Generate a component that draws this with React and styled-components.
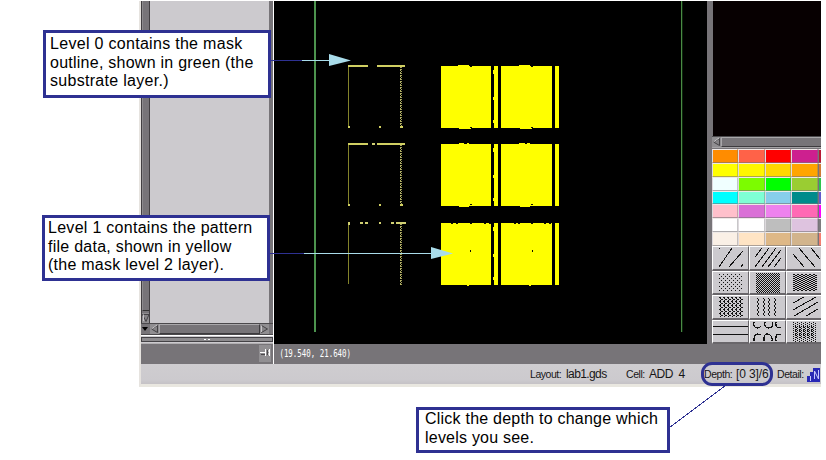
import React from "react";
import styled, { createGlobalStyle } from "styled-components";

const GlobalStyle = createGlobalStyle`
  * { box-sizing: border-box; }
  body { margin: 0; background: #fff; font-family: "Liberation Sans", Arial, sans-serif; }
`;

const Page = styled.div`
  position: relative;
  width: 826px;
  height: 460px;
  overflow: hidden;
  padding: 1px 0 0 139px;
`;

const Window = styled.div`
  width: 682px;
  height: 386px;
  display: flex;
  flex-direction: column;
  border-left: 2px solid #e6e3df;
  border-bottom: 3px solid #e9e7e0;
  background: #777478;
`;

const Workspace = styled.div`
  display: flex;
  height: 343px;
`;

const LayerColumn = styled.div`
  width: 133px;
  display: flex;
  flex-direction: column;
  border-right: 1px solid #fff;
`;

const LayerArea = styled.div`
  display: flex;
  height: 322px;
  padding-right: 4px;
`;

const VerticalScroll = styled.div`
  width: 9px;
  height: 322px;
  border-left: 1px solid #423f42;
  border-right: 1px solid #423f42;
  display: flex;
  flex-direction: column;
  justify-content: space-between;
`;

const VerticalThumb = styled.div`
  height: 310px;
  background: #777478;
  border-left: 1px solid #8d8b8e;
  border-bottom: 1px solid #333;
`;

const LayerList = styled.div`
  flex: 1;
  background: #cccace;
`;

const HorizontalScroll = styled.div`
  display: flex;
  height: 12px;
  padding: ${(p) => (p.$inset ? "0 4px 0 0" : "0")};
  border-top: 1px solid #4b494c;
  border-bottom: 1px solid ${(p) => (p.$inset ? "#4b494c" : "#a5a3a6")};
  background: #777478;
`;

const HorizontalThumb = styled.div`
  flex: 1;
  border: 1px solid #3d3b3e;
  border-right-width: ${(p) => (p.$open ? 0 : 1)}px;
  border-top-color: #a9a7aa;
  border-left-color: #a9a7aa;
`;

const Splitter = styled.div`
  height: 9px;
  border-top: 1px solid #fff;
  border-bottom: 1px solid #b2b0b3;
  background: #cccace;
  padding-top: 1px;
`;

const SplitterBar = styled.div`
  height: 5px;
  border: 1px solid #444246;
  background: #8d8b8e;
  display: flex;
  justify-content: center;
  gap: 2px;
`;

const GripDot = styled.i`
  width: 2px;
  height: 1px;
  margin-top: 1px;
  background: #fff;
`;

const CanvasFrame = styled.div`
  width: 433px;
  background: #000;
  svg { display: block; }
`;

const PaletteColumn = styled.div`
  width: 114px;
  padding-left: 5px;
  background: #777478;
`;

const Preview = styled.div`
  height: 135px;
  background: #070001;
  border-left: 1px solid #777478;
`;

const Swatches = styled.div`
  display: grid;
  grid-template-columns: 26px 27px 26px 27px 3px;
  grid-template-rows: 14px 14px 14px 13px 14px 14px 14px;
  overflow: hidden;
  margin-top: 1px;
`;

const Swatch = styled.div`
  background: ${(p) => p.$color};
  border-top: 1px solid #eee9e7;
  border-left: 1px solid #dedade;
  border-right: 1px solid #77747866;
  border-bottom: 1px solid #77747899;
  &:nth-child(5n) { border-right: 0; border-left-color: #777478; }
`;

const Patterns = styled.div`
  display: grid;
  grid-template-columns: 37px 37px 35px;
  grid-template-rows: repeat(4, 24.5px);
`;

const PatternCell = styled.div`
  overflow: hidden;
  background: #cccace;
  border-top: 1px solid #fff;
  border-left: 1px solid #fff;
  border-right: 1px solid #69666a;
  border-bottom: 2px solid #69666a;
  &:nth-child(3n) { border-right: 0; }
  svg { display: block; }
`;

const CoordinateBar = styled.div`
  height: 20px;
  display: flex;
  background: #777478;
`;

const PinArea = styled.div`
  width: 133px;
  border-right: 1px solid #fff;
  display: flex;
  justify-content: flex-end;
  padding: 1px 2px 2px 0;
`;

const PinButton = styled.div`
  width: 12px;
  background: #918f92;
`;

const Coordinates = styled.div`
  padding: 2px 0 0 8px;
  color: #fff;
  font: 11px/15px "DejaVu Sans Mono", monospace;
  white-space: pre;
  transform: scaleX(0.676);
  transform-origin: left;
`;

const StatusBar = styled.div`
  height: 20px;
  display: flex;
  background: linear-gradient(#cfcdd0, #cccace 80%, #c5c2c6);
  padding-left: 389px;
  color: #171617;
  font: 10.5px/21px "Liberation Sans", Arial, sans-serif;
`;

const StatusField = styled.div`
  width: ${(p) => p.$width}px;
  display: flex;
  white-space: pre;
  flex: none;
`;

const StatusLabel = styled.span`
  display: block;
  width: ${(p) => p.$width}px;
  letter-spacing: -0.45px;
`;

const StatusValue = styled.span`
  font-size: 12px;
  letter-spacing: ${(p) => p.$spacing || 0}px;
`;

const DetailIcon = styled.svg`
  display: block;
  margin-top: 2px;
`;

const Callout = styled.div`
  position: absolute;
  left: ${(p) => p.$x}px;
  top: ${(p) => p.$y}px;
  width: ${(p) => p.$width}px;
  height: ${(p) => p.$height}px;
  padding: ${(p) => p.$pad};
  border: 3px solid #2e3192;
  background: #fff;
  color: #000;
  font-size: 16px;
  line-height: 18.5px;
`;

const CalloutLine = styled.div`
  white-space: nowrap;
  letter-spacing: ${(p) => p.$spacing}px;
`;

const Leaders = styled.svg`
  position: absolute;
  left: 0;
  top: 0;
`;

const DepthRing = styled.div`
  position: absolute;
  left: 701px;
  top: 362px;
  width: 72px;
  height: 24px;
  border: 3px solid #2e3192;
  border-radius: 11px;
`;

const Glyph = styled.svg`
  display: block;
  flex: none;
`;

function Arrow({ dir, dark }) {
  const shapes = {
    left: "M7.5 1.5V8.5L1.5 5Z",
    right: "M1.5 1.5V8.5L7.5 5Z",
    down: "M.5 1.5H7L4 8.5Z",
  };
  return (
    <Glyph width={dir === "down" ? 7 : 9} height="10">
      {dark ? (
        <path d="M1 3H7L4 7Z" fill="#000" />
      ) : (
        <g>
          <rect width="9" height="10" fill="#908e91" />
          <path d={shapes[dir]} fill="#858386" stroke="#454346" />
          <path d={dir === "left" ? "M7 1L1.5 5" : "M1.5 1.5V8"} stroke="#c6c4c7" fill="none" />
        </g>
      )}
    </Glyph>
  );
}

function PatternTile({ x, y, width, strip }) {
  return (
    <g fill="#ff0">
      <rect x={x} y={y} width={width} height="62" />
      <rect x={strip} y={y} width="4" height="62" />
    </g>
  );
}

const bumps = [
  [458, 65, 11], [519, 65, 11], [459, 127, 12], [520, 127, 12],
  [459, 143, 5], [467, 143, 2], [519, 143, 6], [527, 143, 3],
  [459, 205, 10], [520, 205, 10], [467, 284, 2], [529, 284, 2],
];
const notches = [
  [470, 66], [531, 66], [470, 127], [531, 127], [470, 204], [531, 204],
  [451, 223], [456, 223], [470, 223], [484, 223], [489, 223],
  [514, 223], [518, 223], [531, 223], [544, 223], [549, 223],
];

function MaskView() {
  return (
    <svg width="433" height="343" viewBox="274 1 433 343" shapeRendering="crispEdges">
      <rect x="274" y="1" width="433" height="343" fill="#000" />
      <rect x="314" y="1" width="2" height="331" fill="#4c934e" />
      <rect x="681" y="1" width="1" height="331" fill="#4a8a45" />
      <rect x="682" y="1" width="1" height="331" fill="#0c260c" />
      {[66, 144, 223].map((y, i) => (
        <g key={y}>
          <PatternTile x={441} y={y} width={50} strip={494} />
          <PatternTile x={501} y={y} width={51} strip={555} />
          <rect x="493" y={y + 4} width="1" height="4" fill="#ff0" />
          <rect x="493" y={y + 31} width="1" height="3" fill="#ff0" />
          <rect x="493" y={y + 54} width="1" height="3" fill="#ff0" />
          <rect x="348" y={y} width="1" height="61" fill="#83832a" />
          <path d={`M400.5 ${y}V${y + 62}`} stroke="#b0ae65" strokeDasharray="2 1" />
          <path d={`M401.5 ${y + 1}V${y + 62}`} stroke="#a3a158" strokeDasharray="1 1" />
          {i < 2 && (
            <g fill="#d0cf62">
              <rect x="348" y={y - 1} width="20" height="2" />
              <rect x="377" y={y - 1} width="28" height="2" />
              <rect x="348" y={y + 60} width="2" height="2" />
              <rect x="379" y={y + 60} width="2" height="2" />
              <rect x="400" y={y + 60} width="3" height="2" />
            </g>
          )}
        </g>
      ))}
      <g fill="#d0cf72">
        <rect x="372" y="143" width="3" height="2" />
        <rect x="348" y="222" width="2" height="3" />
        <rect x="360" y="222" width="3" height="2" />
        <rect x="365" y="222" width="3" height="2" />
        <rect x="379" y="222" width="2" height="2" />
        <rect x="391" y="222" width="3" height="2" />
        <rect x="396" y="222" width="10" height="2" />
      </g>
      <g fill="#ff0">
        {bumps.map(([x, y, w]) => <rect key={`${x}-${y}`} x={x} y={y} width={w} height="2" />)}
      </g>
      <g fill="#111100">
        {notches.map(([x, y]) => <rect key={`${x}-${y}`} x={x} y={y} width="2" height="1" />)}
        <rect x="470" y="250" width="1" height="2" />
        <rect x="532" y="250" width="1" height="2" />
      </g>
    </svg>
  );
}

function dots(x0, y0, cols, rows, dx, dy, w) {
  let d = "";
  for (let r = 0; r < rows; r++)
    for (let c = 0; c < cols; c++)
      d += `M${x0 + c * dx + (r % 2 ? dx / 2 : 0)} ${y0 + r * dy}h${w}v1h-${w}z`;
  return d;
}

function chevrons(x, y, cols, rows) {
  let d = "";
  for (let r = 0; r < rows; r++)
    for (let c = 0; c < cols; c++)
      d += `M${x + c * 4 + [0, 1, 2, 1][r % 4]} ${y + r}h1v1h-1z`;
  return d;
}

function zigzag(x) {
  let d = `M${x} 2`;
  for (let y = 4; y <= 20; y += 2) d += `L${x + ((y / 2) % 2 ? 0 : 2)} ${y}`;
  return d;
}

const hatches = [
  { line: "M6 2L7 1M6 20L19 1M16 20L30 4M28 20L30 17" },
  { line: "M5 10L12 1M5 20L19 1M12 20L26 1M18 20L31 3M24 20L31 11" },
  { line: "M6 7L17 20M12 1L28 20M24 1L33 12" },
  { fill: dots(6, 2, 6, 9, 4, 2, 1) },
  { fill: dots(6, 1, 12, 20, 2, 1, 1) },
  { fill: dots(6, 2, 6, 17, 4, 1, 2) },
  { fill: chevrons(6, 1, 6, 20) + dots(7, 1, 6, 10, 4, 2, 1) },
  { line: [7, 13, 18, 24].map(zigzag).join("") },
  { line: "M6 7L17 1M6 14L29 1M7 20L31 6M19 20L31 13" },
  { line: "M0 5.5H36M0 13.5H36", width: 1.3 },
  {
    line: "M4 1Q3 7 8 7Q10 7 11 5M15 1Q14 7 19 7Q24 7 22 1M31 6Q25 8 26 1M11 14Q5 11 4 17V20M14 20V16Q16 11 20 14Q23 16 22 20M31 14Q25 11 26 20",
    width: 1.2,
  },
  { fill: dots(6, 1, 6, 20, 4, 1, 1) + chevrons(8, 5, 5, 12) },
];

const colors = [
  "#ff8c00", "#ff6248", "#ff0000", "#cd208f", "#b71934",
  "#ffff00", "#fff600", "#ffd700", "#ffa500", "#cf7b35",
  "#f0ffff", "#7cfc00", "#00ff00", "#9acd32", "#2dc44c",
  "#00ffff", "#7fffd4", "#87ceeb", "#008b8b", "#6259cc",
  "#ffc0cb", "#da70d6", "#ee82ee", "#ff69b4", "#ff00ff",
  "#ffffff", "#ffffff", "#bebebe", "#dec3df", "#7e7c7f",
  "#faf0e6", "#ffe4c4", "#deb887", "#d2b48c", "#f47f71",
];

export default function App() {
  return (
    <Page>
      <GlobalStyle />
      <Window>
        <Workspace>
          <LayerColumn>
            <LayerArea>
              <VerticalScroll>
                <VerticalThumb />
                <Arrow dir="down" />
              </VerticalScroll>
              <LayerList />
            </LayerArea>
            <HorizontalScroll $inset>
              <Arrow dark />
              <Arrow dir="left" />
              <HorizontalThumb />
              <Arrow dir="right" />
            </HorizontalScroll>
            <Splitter>
              <SplitterBar><GripDot /><GripDot /></SplitterBar>
            </Splitter>
          </LayerColumn>
          <CanvasFrame><MaskView /></CanvasFrame>
          <PaletteColumn>
            <Preview />
            <HorizontalScroll>
              <Arrow dir="left" />
              <HorizontalThumb $open />
            </HorizontalScroll>
            <Swatches>
              {colors.map((color, i) => <Swatch key={i} $color={color} />)}
            </Swatches>
            <Patterns>
              {hatches.map((hatch, i) => (
                <PatternCell key={i}>
                  <svg width="36" height="21" shapeRendering="crispEdges">
                    {hatch.line && <path d={hatch.line} fill="none" stroke="#111" strokeWidth={hatch.width || 1} />}
                    {hatch.fill && <path d={hatch.fill} fill="#111" />}
                  </svg>
                </PatternCell>
              ))}
            </Patterns>
          </PaletteColumn>
        </Workspace>
        <CoordinateBar>
          <PinArea>
            <PinButton>
              <Glyph width="12" height="17">
                <path d="M1 7.5H6M6.5 4V11M8 6H10M8 9H10M10.5 4V11" stroke="#fff" fill="none" />
                <path d="M2 9.5H6M8.5 5V10" stroke="#4b494c" />
              </Glyph>
            </PinButton>
          </PinArea>
          <Coordinates>(19.540, 21.640)</Coordinates>
        </CoordinateBar>
        <StatusBar>
          <StatusField $width={96}>
            <StatusLabel $width={36}>Layout:</StatusLabel>
            <StatusValue $spacing={-0.6}>lab1.gds</StatusValue>
          </StatusField>
          <StatusField $width={78}>
            <StatusLabel $width={23}>Cell:</StatusLabel>
            <StatusValue $spacing={-0.5}>ADD  4</StatusValue>
          </StatusField>
          <StatusField $width={73}>
            <StatusLabel $width={32}>Depth:</StatusLabel>
            <StatusValue $spacing={-0.1}>[0 3]/6</StatusValue>
          </StatusField>
          <StatusField $width={30}>
            <StatusLabel $width={30}>Detail:</StatusLabel>
          </StatusField>
          <DetailIcon width="13" height="17">
            <path d="M0 16V10H3V6H6V2H13V16Z" fill="#2929b5" />
            <path d="M3.5 10V15M7.5 13V5L11.5 13V4" stroke="#c6c8ff" fill="none" />
          </DetailIcon>
        </StatusBar>
      </Window>
      <Leaders width="826" height="460">
        <g shapeRendering="crispEdges">
          <path d="M270 60.5H302M269 253.5H304M669 428L725 386" stroke="#2e3192" fill="none" />
          <path d="M302 60.5H330M304 253.5H432" stroke="#a9dcea" />
        </g>
        <path d="M329 54L351 60.5L329 66ZM431 247L453 253.5L431 259Z" fill="#a9dcea" />
      </Leaders>
      <Callout $x={43} $y={30} $width={228} $height={68} $pad="2px 0 0 4px">
        <CalloutLine $spacing={0.3}>Level 0 contains the mask</CalloutLine>
        <CalloutLine $spacing={0.25}>outline, shown in green (the</CalloutLine>
        <CalloutLine $spacing={0.3}>substrate layer.)</CalloutLine>
      </Callout>
      <Callout $x={42} $y={215} $width={228} $height={66} $pad="1px 0 0 3px">
        <CalloutLine $spacing={0.28}>Level 1 contains the pattern</CalloutLine>
        <CalloutLine $spacing={0.25}>file data, shown in yellow</CalloutLine>
        <CalloutLine $spacing={0.25}>(the mask level 2 layer).</CalloutLine>
      </Callout>
      <Callout $x={416} $y={407} $width={254} $height={46} $pad="0 0 0 6px">
        <CalloutLine $spacing={0.23}>Click the depth to change which</CalloutLine>
        <CalloutLine $spacing={0.22}>levels you see.</CalloutLine>
      </Callout>
      <DepthRing />
    </Page>
  );
}
